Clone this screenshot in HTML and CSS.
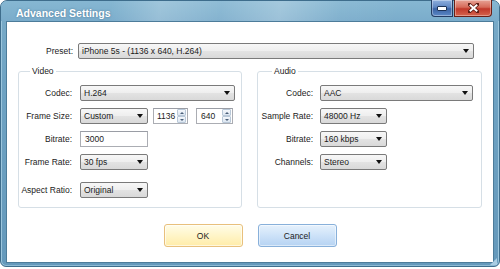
FILE: index.html
```html
<!DOCTYPE html>
<html>
<head>
<meta charset="utf-8">
<title>Advanced Settings</title>
<link rel="stylesheet" href="styles.css">
</head>
<body>
<div class="window">
  <div class="titlebar">
    <span class="title">Advanced Settings</span>
    <div class="caption-btns">
      <div class="cbtn btn-min">
        <svg width="10" height="5" viewBox="0 0 10 5"><rect x="0.5" y="0.5" width="9" height="4" rx="0.5" fill="#fff" stroke="#1d3357" stroke-width="1"/></svg>
      </div>
      <div class="cbtn btn-close">
        <svg width="11" height="10" viewBox="0 0 11 10"><path d="M1.5 1.5 L9.5 8.5 M9.5 1.5 L1.5 8.5" stroke="#5a1a12" stroke-width="3.6" stroke-linecap="square"/><path d="M1.8 1.8 L9.2 8.2 M9.2 1.8 L1.8 8.2" stroke="#fff" stroke-width="2"/></svg>
      </div>
    </div>
  </div>
  <div class="client">
    <div class="preset-row">
      <span class="plbl">Preset:</span>
      <div class="combo preset"><span>iPhone 5s - (1136 x 640, H.264)</span><i class="arrow"></i></div>
    </div>
    <div class="groups">
      <fieldset class="group video">
        <legend>Video</legend>
        <div class="rows">
          <div class="row"><span class="lbl">Codec:</span><div class="combo w155"><span>H.264</span><i class="arrow"></i></div></div>
          <div class="row">
            <span class="lbl">Frame Size:</span>
            <div class="combo w68"><span>Custom</span><i class="arrow"></i></div>
            <div class="field spin s1"><span class="val">1136</span><span class="sbtns"><span class="sb"><i class="up"></i></span><span class="sb"><i class="dn"></i></span></span></div>
            <div class="field spin s2"><span class="val">640</span><span class="sbtns"><span class="sb"><i class="up"></i></span><span class="sb"><i class="dn"></i></span></span></div>
          </div>
          <div class="row"><span class="lbl">Bitrate:</span><div class="field w68">3000</div></div>
          <div class="row"><span class="lbl">Frame Rate:</span><div class="combo w68"><span>30 fps</span><i class="arrow"></i></div></div>
          <div class="row aspect"><span class="lbl">Aspect Ratio:</span><div class="combo w68"><span>Original</span><i class="arrow"></i></div></div>
        </div>
      </fieldset>
      <fieldset class="group audio">
        <legend>Audio</legend>
        <div class="rows">
          <div class="row"><span class="lbl">Codec:</span><div class="combo w153"><span>AAC</span><i class="arrow"></i></div></div>
          <div class="row"><span class="lbl">Sample Rate:</span><div class="combo w67"><span>48000 Hz</span><i class="arrow"></i></div></div>
          <div class="row"><span class="lbl">Bitrate:</span><div class="combo w67"><span>160 kbps</span><i class="arrow"></i></div></div>
          <div class="row"><span class="lbl">Channels:</span><div class="combo w67"><span>Stereo</span><i class="arrow"></i></div></div>
        </div>
      </fieldset>
    </div>
    <div class="buttons">
      <button class="btn ok">OK</button>
      <button class="btn cancel">Cancel</button>
    </div>
  </div>
  <svg class="grip" width="7" height="7" viewBox="0 0 7 7"><path d="M7 0 L7 7 L0 7 Z" fill="#a9cde3"/></svg>
</div>
</body>
</html>
```

FILE: styles.css
```css
* { box-sizing: border-box; }

body {
  margin: 0;
  background: #fff;
  font-family: "Liberation Sans", Arial, sans-serif;
  font-size: 8.5px;
  color: #1b1b1b;
}

.window {
  position: relative;
  width: 500px;
  height: 267px;
  border: 1px solid #3e6d8c;
  border-radius: 7px 7px 6px 6px;
  background: linear-gradient(to bottom, #7aacc9 0%, #6fa3c3 30%, #6599bb 100%);
  box-shadow: inset 1px 0 0 #9cc6dd, inset -1px 0 0 #9cc6dd, inset 0 -1px 0 #8cb9d3;
  padding: 0 5px 3px;
  display: flex;
  flex-direction: column;
}

.titlebar {
  height: 20px;
  margin: 0 -5px;
  padding: 0 7px 0 15px;
  display: flex;
  align-items: flex-start;
  border-radius: 6px 6px 0 0;
  background:
    linear-gradient(100deg, rgba(255,255,255,0) 22%, rgba(255,255,255,0.22) 32%, rgba(255,255,255,0.08) 44%, rgba(255,255,255,0.26) 56%, rgba(255,255,255,0.05) 68%, rgba(255,255,255,0) 80%),
    linear-gradient(to bottom, #86b7d2, #7aaccb);
}

.title {
  margin-top: 6px;
  line-height: 12px;
  font-size: 10.5px;
  font-weight: bold;
  color: #fff;
  text-shadow: 0 0 2px rgba(30, 70, 100, 0.55);
}

.caption-btns {
  margin-left: auto;
  display: flex;
  gap: 1px;
  margin-top: -1px;
}

.cbtn {
  height: 17px;
  border: 1px solid #233c63;
  border-top: none;
  display: flex;
  align-items: center;
  justify-content: center;
}

.btn-min {
  width: 22px;
  border-radius: 0 0 0 4px;
  background: linear-gradient(to bottom, #8fb0de 0%, #5f86c2 45%, #3b63a4 55%, #5b88c6 100%);
  box-shadow: inset 0 0 0 1px rgba(255,255,255,0.35);
}

.btn-close {
  width: 38px;
  border-color: #6b1f16;
  border-radius: 0 0 4px 0;
  background: linear-gradient(to bottom, #e7a396 0%, #d66a59 45%, #c1382a 55%, #d5644e 100%);
  box-shadow: inset 0 0 0 1px rgba(255,255,255,0.35);
}

.client {
  flex: 1;
  background: #fff;
  border: 1px solid #4d7c9a;
  padding: 21px 11px 0;
  display: flex;
  flex-direction: column;
}

.preset-row {
  display: flex;
  align-items: center;
  height: 16px;
  margin-right: 8px;
}

.plbl {
  width: 55px;
  margin-right: 5px;
  text-align: right;
  flex: none;
}

.combo {
  height: 16px;
  border: 1px solid #7a7a7a;
  border-radius: 2px;
  background: linear-gradient(to bottom, #f7f7f7 0%, #eeeeee 50%, #e3e3e3 51%, #d9d9d9 100%);
  display: flex;
  align-items: center;
  padding-left: 3px;
  flex: none;
  white-space: nowrap;
}

.preset { flex: 1; }

.arrow {
  margin-left: auto;
  margin-right: 4px;
  width: 0;
  height: 0;
  border-left: 3.5px solid transparent;
  border-right: 3.5px solid transparent;
  border-top: 4px solid #111;
}

.w155 { width: 155px; }
.w153 { width: 153px; }
.w68 { width: 68px; }
.w67 { width: 67px; }

.groups {
  display: flex;
  gap: 15px;
  margin-top: 7px;
}

.group {
  margin: 0;
  min-width: 0;
  height: 142px;
  border: 1px solid #d6dfe6;
  border-radius: 3px;
  padding: 9px 0 0;
}

.video { width: 224px; }
.audio { width: 225px; }

.group legend {
  padding: 0 2px;
  margin-left: 11px;
  line-height: 10px;
}

.audio legend { margin-left: 14px; }

.rows {
  display: flex;
  flex-direction: column;
  gap: 7px;
}

.row {
  display: flex;
  align-items: center;
  height: 16px;
}

.row.aspect { margin-top: 5px; }

.lbl {
  width: 53px;
  margin-right: 8px;
  text-align: right;
  flex: none;
  white-space: nowrap;
}

.audio .lbl {
  width: 55px;
  margin-right: 7px;
}

.field {
  height: 16px;
  border: 1px solid #abadb3;
  border-top-color: #9a9da5;
  background: #fff;
  padding-left: 4px;
  display: flex;
  align-items: center;
  flex: none;
  white-space: nowrap;
}

.spin { padding-right: 1px; }
.spin .val { flex: 1; }
.s1 { width: 35px; margin-left: 5px; padding-left: 3px; }
.s2 { width: 37px; margin-left: 8px; }

.sbtns {
  display: flex;
  flex-direction: column;
  width: 9px;
  height: 14px;
  flex: none;
}

.sb {
  flex: 1;
  border: 1px solid #b9c8d8;
  border-radius: 1px;
  background: linear-gradient(to bottom, #f4f7fb, #dce6f1);
  display: flex;
  align-items: center;
  justify-content: center;
}

.sb i {
  width: 0;
  height: 0;
  border-left: 2px solid transparent;
  border-right: 2px solid transparent;
}

.sb .up { border-bottom: 2px solid #4a5f78; }
.sb .dn { border-top: 2px solid #4a5f78; }

.buttons {
  display: flex;
  justify-content: center;
  gap: 15px;
  margin-top: 16px;
}

.btn {
  width: 79px;
  height: 23px;
  margin: 0;
  padding: 0;
  border-radius: 3px;
  font: inherit;
  color: #1b1b1b;
  display: flex;
  align-items: center;
  justify-content: center;
}

.ok {
  border: 1px solid #e8c07c;
  background: linear-gradient(to bottom, #fffce8 0%, #fff5c8 50%, #ffeca8 100%);
  box-shadow: inset 0 0 0 1px rgba(255,255,255,0.6);
}

.cancel {
  border: 1px solid #88b0da;
  background: linear-gradient(to bottom, #e6f1fc 0%, #cde2f8 50%, #b6d3f3 100%);
  box-shadow: inset 0 0 0 1px rgba(255,255,255,0.5);
}

.grip {
  position: absolute;
  right: 2px;
  bottom: 1px;
}
```
